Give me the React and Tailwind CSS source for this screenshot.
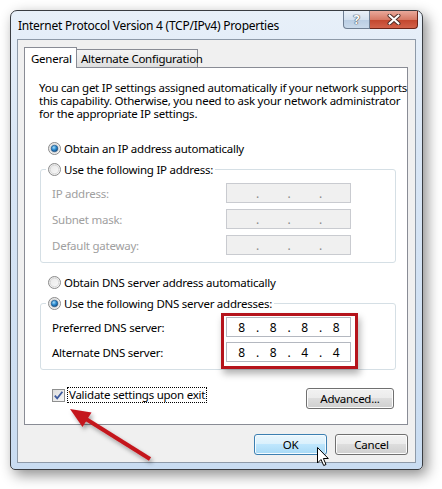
import React from "react";

// Win7 radio glyph
const Radio = ({ checked }) => (
  <svg width="13" height="13" viewBox="0 0 13 13" className="shrink-0">
    <defs>
      <linearGradient id="rbg" x1="0" y1="0" x2="1" y2="1">
        <stop offset="0" stopColor="#e6e6e6" />
        <stop offset="1" stopColor="#fbfbfb" />
      </linearGradient>
      <radialGradient id="rdot" cx="0.4" cy="0.35" r="0.7">
        <stop offset="0" stopColor="#a9dcf6" />
        <stop offset="0.5" stopColor="#2a8ad0" />
        <stop offset="1" stopColor="#10467a" />
      </radialGradient>
    </defs>
    <circle cx="6.5" cy="6.5" r="6" fill="url(#rbg)" stroke="#8a8a8a" />
    <circle cx="6.5" cy="6.5" r="4.3" fill="none" stroke="#d0d0d0" strokeWidth="0.8" />
    {checked && <circle cx="6.5" cy="6.5" r="3.3" fill="url(#rdot)" stroke="#1d4d7c" strokeWidth="0.6" />}
  </svg>
);

// ip address box with the four octets
const IpBox = ({ values, disabled }) => (
  <div
    className={
      "flex h-[20px] w-[125px] items-center border pl-[1px] text-[12px] tracking-normal " +
      (disabled ? "border-[#c9cbd0] bg-[#f0f0f0] text-[#8a8a8a]" : "border-[#b4b8c0] bg-white text-black")
    }
  >
    {[0, 1, 2, 3].map((i) => (
      <React.Fragment key={i}>
        <span className="w-[28px] text-center">{values ? values[i] : ""}</span>
        {i < 3 && <span className="w-[4px] text-center">.</span>}
      </React.Fragment>
    ))}
  </div>
);

const Row = ({ label, children, disabled }) => (
  <div className="flex h-[20px] items-center">
    <span className={"w-[174px] " + (disabled ? "text-[#a0a0a0]" : "text-black")}>{label}</span>
    {children}
  </div>
);

const btn =
  "h-[21px] rounded-[3px] border border-[#707070] bg-[linear-gradient(180deg,#f2f2f2_0%,#ebebeb_49%,#dddddd_50%,#cfcfcf_100%)] shadow-[inset_0_0_0_1px_#fcfcfc] text-black";

export default function App() {
  return (
    <div className="relative h-[489px] w-[442px] overflow-hidden whitespace-nowrap bg-white pl-[10px] pt-[10px] font-['Noto_Sans',sans-serif] text-[11.5px] leading-[13px] tracking-[-0.25px] text-black">
      {/* window */}
      <div className="flex h-[460px] w-[413px] flex-col rounded-b-[5px] rounded-t-[7px] border border-[#3a3d42] bg-[linear-gradient(180deg,#e8f0f9_0%,#d9e6f5_30%,#c9dcf1_100%)] shadow-[4px_5px_14px_rgba(0,0,0,0.45)]">
        {/* title bar */}
        <div className="flex h-[28px] shrink-0 items-start">
          <div className="flex h-full flex-1 items-center pl-[7px] text-[12px]">Internet Protocol Version 4 (TCP/IPv4) Properties</div>
          <div className="mr-[4px] flex h-[18px]">
            <div className="flex w-[27px] items-center justify-center rounded-bl-[4px] border border-t-0 border-[#6f7f93] bg-[linear-gradient(180deg,#e9f0f8_0%,#d4e1ef_50%,#b9cde3_51%,#c9daeb_100%)] text-[13px] font-bold text-white [text-shadow:0_0_1px_#404a55,0_0_1px_#404a55,0_0_1px_#404a55]">
              ?
            </div>
            <div className="flex w-[48px] items-center justify-center rounded-br-[4px] border border-l-0 border-t-0 border-[#6b2418] bg-[linear-gradient(180deg,#e9a99b_0%,#d67a66_50%,#c2452c_51%,#d2624a_100%)]">
              <svg width="14" height="11" viewBox="0 0 14 11">
                <path d="M2.5 1.5 L11.5 9.5 M11.5 1.5 L2.5 9.5" stroke="#4a2a24" strokeWidth="4" strokeLinecap="round" />
                <path d="M2.5 1.5 L11.5 9.5 M11.5 1.5 L2.5 9.5" stroke="#ffffff" strokeWidth="2.2" strokeLinecap="round" />
              </svg>
            </div>
          </div>
        </div>

        {/* client area */}
        <div className="mx-[6px] flex h-[424px] shrink-0 flex-col border border-[#8e9aa8] bg-[#f0f0f0] px-[6px] pt-[7px]">
          {/* tabs */}
          <div className="relative z-10 -mb-px flex h-[21px] items-end">
            <div className="flex h-[21px] w-[53px] items-center border border-b-0 border-[#898c95] bg-white pl-[6px]">General</div>
            <div className="mb-px flex h-[18px] w-[121px] items-center border-r border-t border-[#898c95] bg-[linear-gradient(180deg,#f4f4f4_0%,#ebebeb_50%,#dedede_100%)] pl-[4px]">
              Alternate Configuration
            </div>
          </div>

          {/* tab panel */}
          <div className="flex h-[358px] w-[384px] flex-col border border-[#898c95] bg-white pl-[14px] pr-[12px] pt-[13px]">
            <p>
              You can get IP settings assigned automatically if your network supports
              <br />
              this capability. Otherwise, you need to ask your network administrator
              <br />
              for the appropriate IP settings.
            </p>

            <div className="ml-[9px] mt-[20px] flex h-[17px] items-center gap-[3px]">
              <Radio checked />
              <span>Obtain an IP address automatically</span>
            </div>

            <fieldset className="ml-[1px] mt-[4px] w-[356px] rounded-[3px] border border-[#d5dfe5] pb-[7px] pl-[11px]">
              <legend className="-ml-[6px] px-[2px]">
                <div className="flex h-[17px] items-center gap-[3px]">
                  <Radio />
                  <span>Use the following IP address:</span>
                </div>
              </legend>
              <div className="mt-[5px] flex flex-col gap-[6px]">
                <Row label="IP address:" disabled>
                  <IpBox disabled />
                </Row>
                <Row label="Subnet mask:" disabled>
                  <IpBox disabled />
                </Row>
                <Row label="Default gateway:" disabled>
                  <IpBox disabled />
                </Row>
              </div>
            </fieldset>

            <div className="ml-[9px] mt-[11px] flex h-[17px] items-center gap-[3px]">
              <Radio />
              <span>Obtain DNS server address automatically</span>
            </div>

            <fieldset className="ml-[1px] mt-[4px] w-[356px] rounded-[3px] border border-[#d5dfe5] pb-[7px] pl-[11px]">
              <legend className="-ml-[6px] px-[2px]">
                <div className="flex h-[17px] items-center gap-[3px]">
                  <Radio checked />
                  <span>Use the following DNS server addresses:</span>
                </div>
              </legend>
              <div className="mt-[5px] flex flex-col gap-[5px]">
                <Row label="Preferred DNS server:">
                  <IpBox values={["8", "8", "8", "8"]} />
                </Row>
                <Row label="Alternate DNS server:">
                  <IpBox values={["8", "8", "4", "4"]} />
                </Row>
              </div>
            </fieldset>

            <div className="mt-[17px] flex items-start justify-between">
              <div className="ml-[13px] flex items-center gap-[2px]">
                <div className="flex h-[13px] w-[13px] items-center justify-center border border-[#8e8f8f] bg-[linear-gradient(135deg,#dcdcdc_0%,#f7f7f7_100%)]">
                  <svg width="11" height="11" viewBox="0 0 11 11">
                    <path d="M1.8 5.6 L4.2 8.4 L9.4 1.8" fill="none" stroke="#3d5a9e" strokeWidth="1.8" />
                  </svg>
                </div>
                <span className="border border-dotted border-black px-[1px] leading-[14px]">Validate settings upon exit</span>
              </div>
              <button className={btn + " mr-[1px] mt-[1px] h-[20px] w-[88px]"}>Advanced...</button>
            </div>
          </div>

          {/* dialog buttons */}
          <div className="mt-[9px] flex w-[384px] justify-end gap-[8px]">
            <button className="h-[21px] w-[73px] rounded-[3px] border border-[#3c7fb1] bg-[linear-gradient(180deg,#eaf6fd_0%,#d9f0fc_49%,#bee6fd_50%,#a7d9f5_100%)] shadow-[inset_0_0_0_1px_#f4fbff]">
              OK
            </button>
            <button className={btn + " w-[73px]"}>Cancel</button>
          </div>
        </div>
      </div>

      {/* annotation: red box */}
      <div className="absolute left-[221px] top-[313px] h-[56px] w-[137px] border-[3px] border-[#b5131b] shadow-[2px_5px_7px_rgba(0,0,0,0.3)]" />

      {/* annotation: arrow + mouse pointer */}
      <svg className="pointer-events-none absolute left-0 top-0" width="442" height="489" viewBox="0 0 442 489">
        <defs>
          <filter id="ash" x="-20%" y="-20%" width="140%" height="140%">
            <feDropShadow dx="2" dy="3" stdDeviation="2" floodColor="#000" floodOpacity="0.35" />
          </filter>
        </defs>
        <g filter="url(#ash)">
          <line x1="150" y1="459" x2="86" y2="419" stroke="#c4141c" strokeWidth="4" />
          <polygon points="70,409 91.5,412.5 82.5,427" fill="#c4141c" />
        </g>
        <path
          d="M317.5 447.5 L317.5 463 L321 459.5 L323.7 465.5 L326 464.5 L323.4 458.5 L328.3 458.5 Z"
          fill="#ffffff"
          stroke="#000000"
          strokeWidth="1"
          strokeLinejoin="round"
        />
      </svg>
    </div>
  );
}
